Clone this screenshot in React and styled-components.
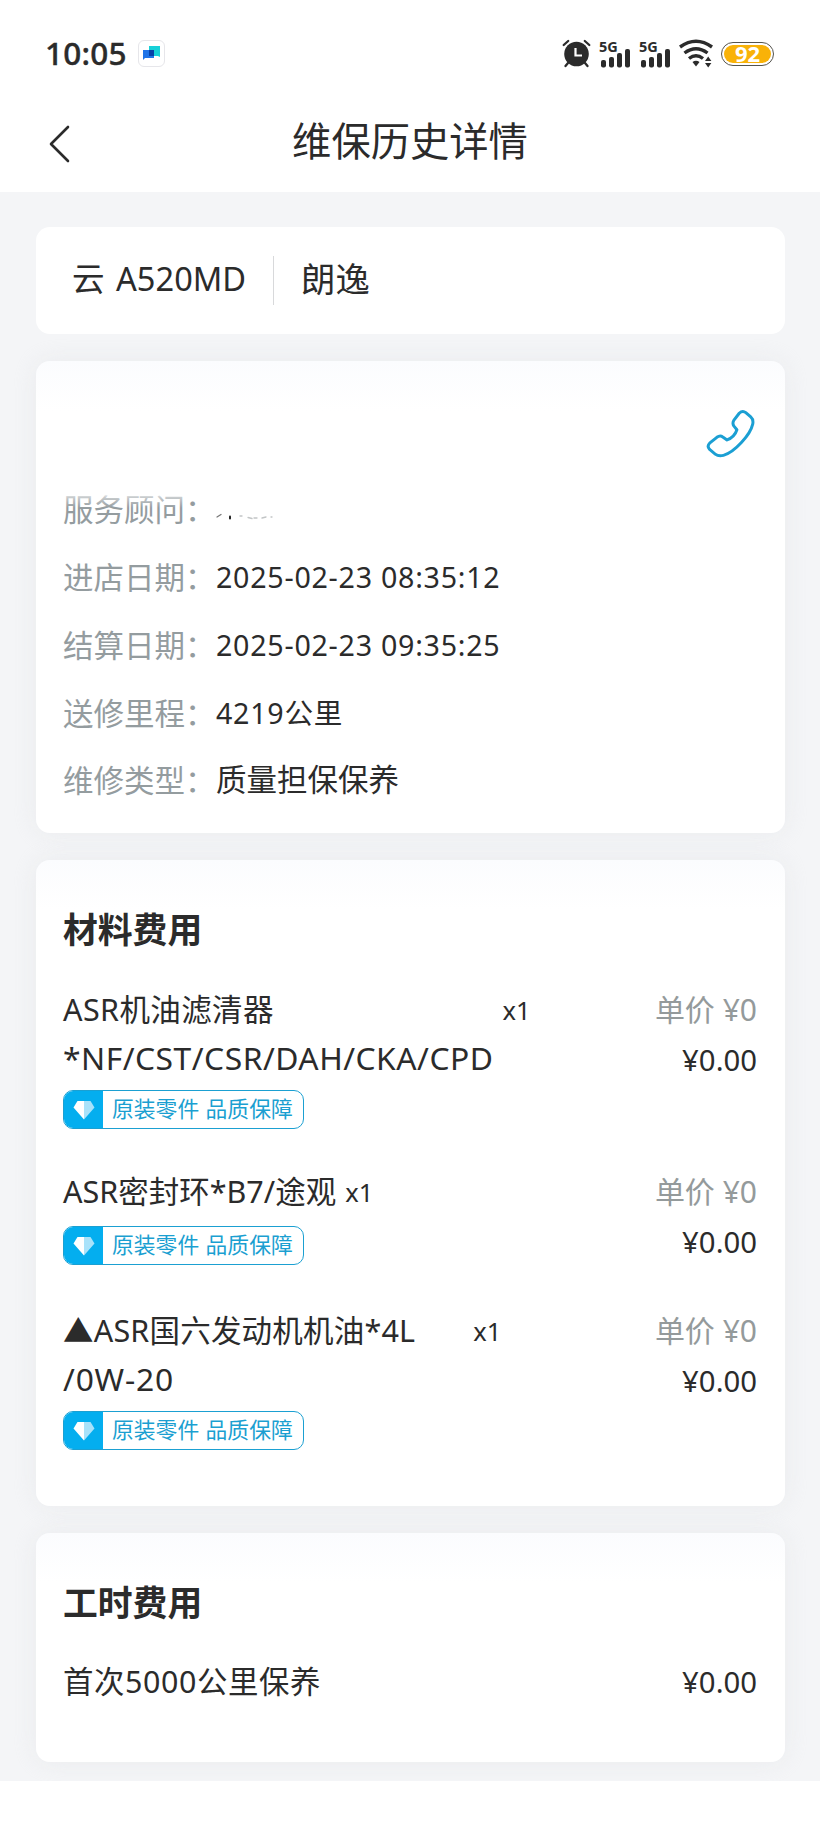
import React from 'react';
import styled, { createGlobalStyle } from 'styled-components';

const GlobalStyle = createGlobalStyle`
  * {
    box-sizing: border-box;
  }

  body {
    margin: 0;
    background: #ffffff;
    color: #2b2b2b;
    font-family: "Noto Sans", "Noto Sans CJK SC", sans-serif;
  }

  svg {
    display: block;
    flex: none;
  }
`;

const Page = styled.div`
  width: 820px;
  height: 1822px;
  background: #ffffff;
  overflow: hidden;
`;

const StatusBar = styled.div`
  height: 92px;
  padding: 15px 46px 0 45px;
  display: flex;
  align-items: center;
  justify-content: space-between;
`;

const StatusLeft = styled.div`
  display: flex;
  align-items: center;
  gap: 11px;
`;

const Clock = styled.span`
  font-size: 31.5px;
  font-weight: 500;
  line-height: 40px;
  letter-spacing: 0.2px;
  -webkit-text-stroke: 0.4px #2b2b2b;
  margin-top: -2px;
`;

const AppBadge = styled.div`
  width: 27px;
  height: 27px;
  border: 1px solid #e6e6ea;
  border-radius: 6px;
  display: flex;
  align-items: center;
  justify-content: center;
`;

const StatusIcons = styled.div`
  display: flex;
  align-items: center;
  gap: 8px;
`;

const Signal = styled.div`
  width: 32px;
  height: 29px;
  display: flex;
  flex-direction: column;
`;

const SignalType = styled.span`
  height: 9px;
  font-size: 14.5px;
  line-height: 14px;
  font-weight: 700;
`;

const Battery = styled.div`
  width: 53px;
  height: 24px;
  border: 1px solid #55544e;
  border-radius: 12px;
  padding: 2px;
  display: flex;
`;

const BatteryFill = styled.div`
  flex: 1;
  border-radius: 9px;
  background: #f9b208;
  color: #ffffff;
  font-size: 22px;
  font-weight: 700;
  line-height: 16px;
  text-align: center;
`;

const NavBar = styled.div`
  height: 100px;
  padding: 0 49px;
  display: grid;
  grid-template-columns: 60px 1fr 60px;
  align-items: center;

  svg {
    margin-top: 3px;
  }
`;

const NavTitle = styled.h1`
  margin: -2px 0 0;
  font-size: 39.3px;
  font-weight: 400;
  line-height: 60px;
  text-align: center;
`;

const Content = styled.main`
  height: 1589px;
  padding: 35px 35px 0 36px;
  background: #f4f5f7;
  display: flex;
  flex-direction: column;
  gap: 27px;
  overflow: hidden;
`;

const Card = styled.section`
  height: ${(props) => props.$height}px;
  padding: 0 28px 0 27px;
  flex: none;
  border-radius: 14px;
  background: ${(props) => (props.$tinted ? 'linear-gradient(#fbfcfe, #ffffff 50px)' : '#ffffff')};
  box-shadow: ${(props) => (props.$tinted ? '0 0 24px rgba(220, 222, 226, 0.4)' : 'none')};
`;

const CarCard = styled(Card)`
  padding-left: 36px;
  display: flex;
  align-items: center;
`;

const CarText = styled.span`
  margin-top: -7px;
  font-size: ${(props) => props.$size}px;
  word-spacing: 3px;
`;

const Divider = styled.span`
  width: 1px;
  height: 49px;
  margin: 0 27px 0 27px;
  background: #d8d9db;
`;

const CallRow = styled.div`
  height: 114px;
  padding: 47px 1px 0 0;
  display: flex;
  justify-content: flex-end;
`;

const InfoRow = styled.div`
  height: ${(props) => props.$height || 68}px;
  display: flex;
  align-items: center;
`;

const InfoLabel = styled.span`
  position: relative;
  margin-top: -3px;
  color: #949c9f;
  font-family: "Noto Sans CJK SC", sans-serif;
  font-size: 30.5px;
  line-height: 44px;
  width: 153px;
  white-space: nowrap;

  /* fades out the upper edge of a hidden entry */
  &::after {
    content: "";
    display: ${(props) => (props.$faded ? 'block' : 'none')};
    position: absolute;
    left: 0;
    top: 0;
    width: 122px;
    height: 22px;
    background: linear-gradient(#ffffff 8px, rgba(255, 255, 255, 0.5) 11px, rgba(255, 255, 255, 0));
  }
`;

const InfoValue = styled.span`
  margin-top: ${(props) => (props.$cjk ? '-3px' : '0')};
  font-size: ${(props) => (props.$cjk ? '30.5px' : '28.6px')};
  letter-spacing: ${(props) => (props.$cjk ? '0' : '0.75px')};
  line-height: 44px;
  white-space: nowrap;
`;

const SectionTitle = styled.h2`
  margin: 0;
  padding-top: 45px;
  font-size: 34.8px;
  font-weight: 700;
  line-height: 50px;
`;

const PartList = styled.div`
  margin-top: 31px;
  display: flex;
  flex-direction: column;
  gap: 39px;
`;

const PartRow = styled.div`
  display: flex;
  justify-content: space-between;
`;

const PartHead = styled.div`
  display: flex;
  gap: ${(props) => props.$gap}px;
`;

const PartName = styled.div`
  line-height: 47.5px;
  white-space: pre;
`;

const NameLine = styled.div`
  height: 47.5px;
  font-size: ${(props) => props.$size || 30.5}px;
  letter-spacing: ${(props) => props.$spacing}px;
`;

const Quantity = styled.span`
  font-size: 25.5px;
  line-height: 49px;
`;

const Tag = styled.div`
  width: 241px;
  height: 39px;
  margin-top: 9px;
  display: flex;
  border: 1.5px solid #1ba0d2;
  border-radius: 10px;
  overflow: hidden;
`;

const TagIcon = styled.span`
  width: 39px;
  background: #04aeef;
  display: flex;
  align-items: center;
  justify-content: center;
`;

const TagText = styled.span`
  padding-left: 9px;
  color: #1b9fd1;
  font-family: "Noto Sans CJK SC", sans-serif;
  font-size: 21.8px;
  line-height: 33px;
  word-spacing: 1.5px;
  white-space: nowrap;
`;

const Prices = styled.div`
  margin-top: -2px;
  display: flex;
  flex-direction: column;
  align-items: flex-end;
  line-height: 51px;
`;

const UnitPrice = styled.span`
  height: 51px;
  color: #949a9b;
  font-size: 30px;
`;

const Price = styled.span`
  font-size: 29.3px;
`;

const LaborRow = styled.div`
  margin-top: 29px;
  display: flex;
  justify-content: space-between;
  line-height: 50px;
`;

const LaborName = styled.span`
  font-size: 30.4px;
  letter-spacing: 0.6px;
`;

const infoRows = [
  { label: '进店日期：', value: '2025-02-23 08:35:12' },
  { label: '结算日期：', value: '2025-02-23 09:35:25' },
  { label: '送修里程：', value: '4219公里' },
  { label: '维修类型：', value: '质量担保保养', cjk: true, height: 66 },
];

const parts = [
  {
    id: 1,
    gap: 9,
    lines: [
      { text: 'ASR机油滤清器', spacing: 0.4 },
      { text: '*NF/CST/CSR/DAH/CKA/CPD', size: 31.8, spacing: 0.5 },
    ],
  },
  {
    id: 2,
    gap: 9,
    lines: [{ text: 'ASR密封环*B7/途观', spacing: 0 }],
  },
  {
    id: 3,
    gap: 58,
    lines: [
      { text: '▲ASR国六发动机机油*4L', spacing: 0.2 },
      { text: '/0W-20', size: 31.8, spacing: 0.8 },
    ],
  },
];

function ChatIcon() {
  return (
    <svg width="19" height="17" viewBox="0 0 19 17">
      <path d="M7 1h11v11l-2-1H7z" fill="#17d0d8" />
      <path d="M1 5h11v8H3l-2 2z" fill="#1f74e8" />
      <path d="M7 5h5v6H7z" fill="#0641a8" />
    </svg>
  );
}

function AlarmIcon() {
  return (
    <svg width="29" height="29" viewBox="0 0 29 29" fill="none" stroke="#2b2b2b" strokeLinecap="round">
      <circle cx="14.5" cy="15" r="12.3" fill="#2b2b2b" stroke="none" />
      <path d="M1.700 6l4.500-4M27.300 6l-4.500-4M6 24l-2.500 3M23 24l2.500 3" strokeWidth="2.300" />
      <path d="M13.500 9v7.500h6.500" stroke="#ffffff" strokeWidth="2.200" strokeLinecap="butt" />
    </svg>
  );
}

function SignalBars() {
  return (
    <svg width="32" height="20" viewBox="0 0 32 20" fill="#2b2b2b">
      <rect x="2" y="12" width="5" height="7.500" rx="2" />
      <rect x="10" y="9" width="5" height="10.500" rx="2" />
      <rect x="18" y="5" width="5" height="14.500" rx="2" />
      <rect x="26" y="1" width="5" height="18.500" rx="2" />
    </svg>
  );
}

function WifiIcon() {
  return (
    <svg width="34" height="29" viewBox="0 0 34 29" fill="none" stroke="#2b2b2b" strokeWidth="3.400">
      <path d="M1 8Q17-3.500 33 8" />
      <path d="M5.500 14Q17 5.500 28.500 14" />
      <path d="M10 19.500Q17 14 24 19.500" />
      <path d="M13.500 23Q17 20.500 20.500 23L17 27.500z" fill="#2b2b2b" stroke="none" />
      <path d="M26 22l3.200-4.500 3.200 4.500zM26 24l3.200 4.500 3.200-4.500z" fill="#2b2b2b" stroke="none" />
    </svg>
  );
}

function BackIcon() {
  return (
    <svg width="21" height="38" viewBox="0 0 21 38" fill="none" stroke="#2b2b2b" strokeWidth="2.600" strokeLinecap="round" strokeLinejoin="round">
      <path d="M19 2L2 19l17 17" />
    </svg>
  );
}

function PhoneIcon() {
  return (
    <svg width="51" height="51" viewBox="0 0 155 155" fill="none" stroke="#1b9fd3" strokeWidth="9" strokeLinejoin="round">
      <path d="M104 16Q114 6 124 14L139 27Q148 35 145 49C138 81 90 135 56 144Q41 148 31 140L14 126Q5 116 14 107L36 89Q46 82 54 88L67 97C80 92 92 82 97 66L88 55Q82 46 88 37Z" />
    </svg>
  );
}

function DiamondIcon() {
  return (
    <svg width="22" height="20" viewBox="0 0 22 20">
      <path d="M4.500 1H11v18.500L.5 7.500z" fill="#ffffff" />
      <path d="M11 1h6.500l4 6.500L11 19.500z" fill="#a9e2fa" />
    </svg>
  );
}

/* leftover strokes of the hidden advisor name */
function HiddenName() {
  return (
    <svg width="62" height="44" viewBox="0 0 62 44" fill="none" strokeWidth="1.300" strokeLinecap="round">
      <path d="M1 30l4-2.500" stroke="#777777" />
      <path d="M14 29.500v2" stroke="#222222" strokeWidth="2" />
      <path d="M24 29h2M32 30.500l4 1M38 31h3M46 31l4-1M55 30h1" stroke="#c2c5c6" />
    </svg>
  );
}

function OriginalTag() {
  return (
    <Tag>
      <TagIcon>
        <DiamondIcon />
      </TagIcon>
      <TagText>原装零件 品质保障</TagText>
    </Tag>
  );
}

function Part({ lines, gap }) {
  return (
    <PartRow>
      <div>
        <PartHead $gap={gap}>
          <PartName>
            {lines.map((line) => (
              <NameLine key={line.text} $size={line.size} $spacing={line.spacing}>{line.text}</NameLine>
            ))}
          </PartName>
          <Quantity>x1</Quantity>
        </PartHead>
        <OriginalTag />
      </div>
      <Prices>
        <UnitPrice>单价 ¥0</UnitPrice>
        <Price>¥0.00</Price>
      </Prices>
    </PartRow>
  );
}

function App() {
  return (
    <Page>
      <GlobalStyle />
      <StatusBar>
        <StatusLeft>
          <Clock>10:05</Clock>
          <AppBadge>
            <ChatIcon />
          </AppBadge>
        </StatusLeft>
        <StatusIcons>
          <AlarmIcon />
          <Signal>
            <SignalType>5G</SignalType>
            <SignalBars />
          </Signal>
          <Signal>
            <SignalType>5G</SignalType>
            <SignalBars />
          </Signal>
          <WifiIcon />
          <Battery>
            <BatteryFill>92</BatteryFill>
          </Battery>
        </StatusIcons>
      </StatusBar>
      <NavBar>
        <BackIcon />
        <NavTitle>维保历史详情</NavTitle>
      </NavBar>
      <Content>
        <CarCard $height={107}>
          <CarText $size={32.6}>云 A520MD</CarText>
          <Divider />
          <CarText $size={34.3}>朗逸</CarText>
        </CarCard>
        <Card $height={472} $tinted>
          <CallRow>
            <PhoneIcon />
          </CallRow>
          <InfoRow>
            <InfoLabel $faded>服务顾问：</InfoLabel>
            <HiddenName />
          </InfoRow>
          {infoRows.map((row) => (
            <InfoRow key={row.label} $height={row.height}>
              <InfoLabel>{row.label}</InfoLabel>
              <InfoValue $cjk={row.cjk}>{row.value}</InfoValue>
            </InfoRow>
          ))}
        </Card>
        <Card $height={646} $tinted>
          <SectionTitle>材料费用</SectionTitle>
          <PartList>
            {parts.map((part) => (
              <Part key={part.id} lines={part.lines} gap={part.gap} />
            ))}
          </PartList>
        </Card>
        <Card $height={229} $tinted>
          <SectionTitle>工时费用</SectionTitle>
          <LaborRow>
            <LaborName>首次5000公里保养</LaborName>
            <Price>¥0.00</Price>
          </LaborRow>
        </Card>
      </Content>
    </Page>
  );
}

export default App;
